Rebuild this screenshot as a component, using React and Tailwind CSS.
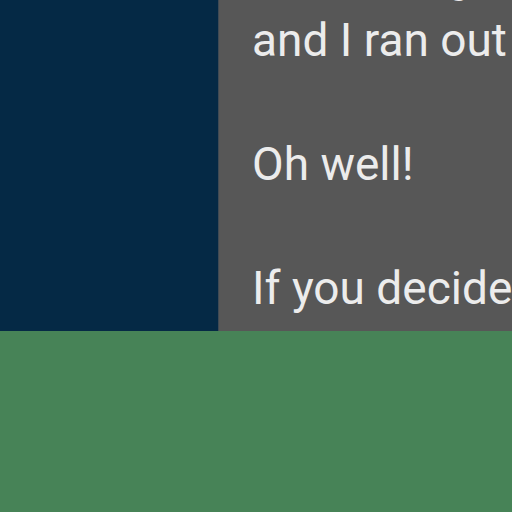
export default function App() {
  return (
    <div className="w-[512px] h-[512px] flex flex-col overflow-hidden" style={{ fontFamily: "Roboto, 'Noto Sans', sans-serif" }}>
      <div className="h-[331px] flex">
        <div className="w-[218px] shrink-0 bg-[#052945]" />
        <div className="flex-1 bg-[#575757] border-l border-[#3f4a55] overflow-hidden">
          <div className="mt-[-57px] pl-[33px] text-[46px] leading-[62px] text-[#ececec] whitespace-nowrap">
            <div className="leading-[66px]">was a long thing</div>
            <div>and I ran out of time.</div>
            <div>&nbsp;</div>
            <div>Oh well!</div>
            <div>&nbsp;</div>
            <div>If you decide to read it</div>
          </div>
        </div>
      </div>
      <div className="flex-1 bg-[#478357]" />
    </div>
  );
}
